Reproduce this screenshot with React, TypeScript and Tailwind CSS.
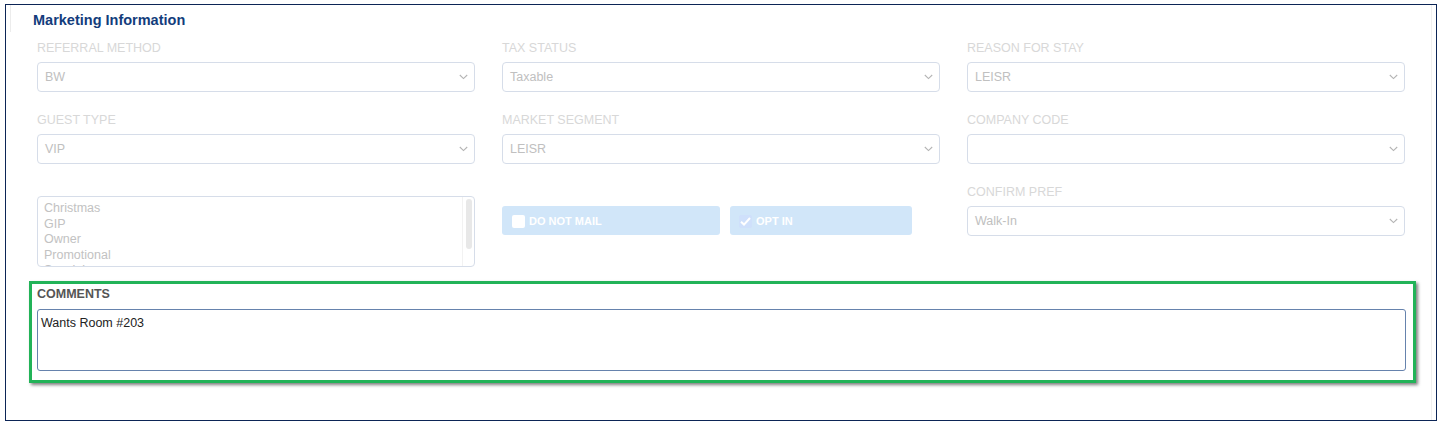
import React from 'react';

const font = { fontFamily: '"Liberation Sans", Arial, sans-serif' };

const Chevron = () => (
  <svg width="9" height="6" viewBox="0 0 9 6" className="shrink-0">
    <path d="M0.8 1 L4.5 4.6 L8.2 1" fill="none" stroke="#b4b4b4" strokeWidth="1.1" />
  </svg>
);

const Label = ({ text }: { text: string }) => (
  <div className="h-[14px] text-[12.5px] leading-[14px] text-[#d8d8d8] uppercase whitespace-nowrap">{text}</div>
);

const Select = ({ value }: { value: string }) => (
  <div className="mt-[7px] h-[30px] border border-[#d6dde9] rounded-[4px] flex items-center justify-between pl-[7px] pr-[6px] bg-white">
    <span className="text-[12.5px] text-[#c0c0c0]">{value}</span>
    <Chevron />
  </div>
);

const Field = ({ label, value }: { label: string; value: string }) => (
  <div>
    <Label text={label} />
    <Select value={value} />
  </div>
);

const listItems = ['Christmas', 'GIP', 'Owner', 'Promotional', 'Special'];

export default function App() {
  return (
    <div className="bg-white w-[1442px] h-[425px] pt-[4px] pl-[5px]" style={font}>
      <div className="w-[1432px] h-[417px] border border-[#0c2556] relative">
        <div className="absolute left-[4px] top-0 w-px h-[27px] bg-[#ececec]" />
        <div className="absolute right-[4px] top-0 w-px h-full bg-[#f0f0f0]" />
        <div className="pl-[27px] pt-[5px] h-[20px] box-content">
          <h2 className="text-[14.5px] leading-[20px] font-bold text-[#133d7c]">Marketing Information</h2>
        </div>
        <div className="pl-[31px] mt-[11px]">
          <div className="grid grid-cols-[438px_438px_438px] gap-x-[27px] gap-y-[21px]">
            <Field label="Referral Method" value="BW" />
            <Field label="Tax Status" value="Taxable" />
            <Field label="Reason for Stay" value="LEISR" />
            <Field label="Guest Type" value="VIP" />
            <Field label="Market Segment" value="LEISR" />
            <Field label="Company Code" value="" />

            <div className="pt-[11px]">
              <div className="h-[71px] border border-[#d6dde9] rounded-[4px] overflow-hidden flex">
                <div className="flex-1 pl-[6px] pt-[4px] text-[12.5px] leading-[15.5px] text-[#c2c2c2]">
                  {listItems.map(i => (
                    <div key={i}>{i}</div>
                  ))}
                </div>
                <div className="w-[12px] border-l border-[#f2f2f2] pt-[2px] flex justify-center">
                  <div className="w-[6px] h-[50px] rounded-full bg-[#e8e8e8]" />
                </div>
              </div>
            </div>

            <div className="pt-[21px] flex gap-[10px]">
              <div className="w-[218px] h-[29px] rounded-[3px] bg-[#d1e6f9] flex items-center pl-[10px] pt-[1px] gap-[4px]">
                <div className="w-[13px] h-[13px] rounded-[2px] bg-white" />
                <span className="text-[11px] font-bold text-white">DO NOT MAIL</span>
              </div>
              <div className="w-[182px] h-[29px] rounded-[3px] bg-[#d1e6f9] flex items-center pl-[9px] pt-[1px] gap-[4px]">
                <div className="w-[13px] h-[13px] rounded-[2px] bg-[#cfe0fb] flex items-center justify-center">
                  <svg width="11" height="9" viewBox="0 0 11 9">
                    <path d="M1 4.8 L4 7.6 L10 1" fill="none" stroke="white" strokeWidth="2" />
                  </svg>
                </div>
                <span className="text-[11px] font-bold text-white">OPT IN</span>
              </div>
            </div>

            <Field label="Confirm Pref" value="Walk-In" />
          </div>

          <div className="mt-[14px] -ml-[8px] w-[1387px] h-[102px] border-[3px] border-[#22b358] shadow-[2px_2px_3px_rgba(0,0,0,0.5)] pl-[5px] pr-[7px] pt-[3px]">
            <div className="h-[14px] text-[12.5px] leading-[14px] font-bold text-[#555]">COMMENTS</div>
            <div className="mt-[8px] h-[62px] border border-[#6683ad] rounded-[3px] px-[3px] pt-[4px] text-[12.5px] text-[#222]">
              Wants Room #203
            </div>
          </div>
        </div>
      </div>
    </div>
  );
}
